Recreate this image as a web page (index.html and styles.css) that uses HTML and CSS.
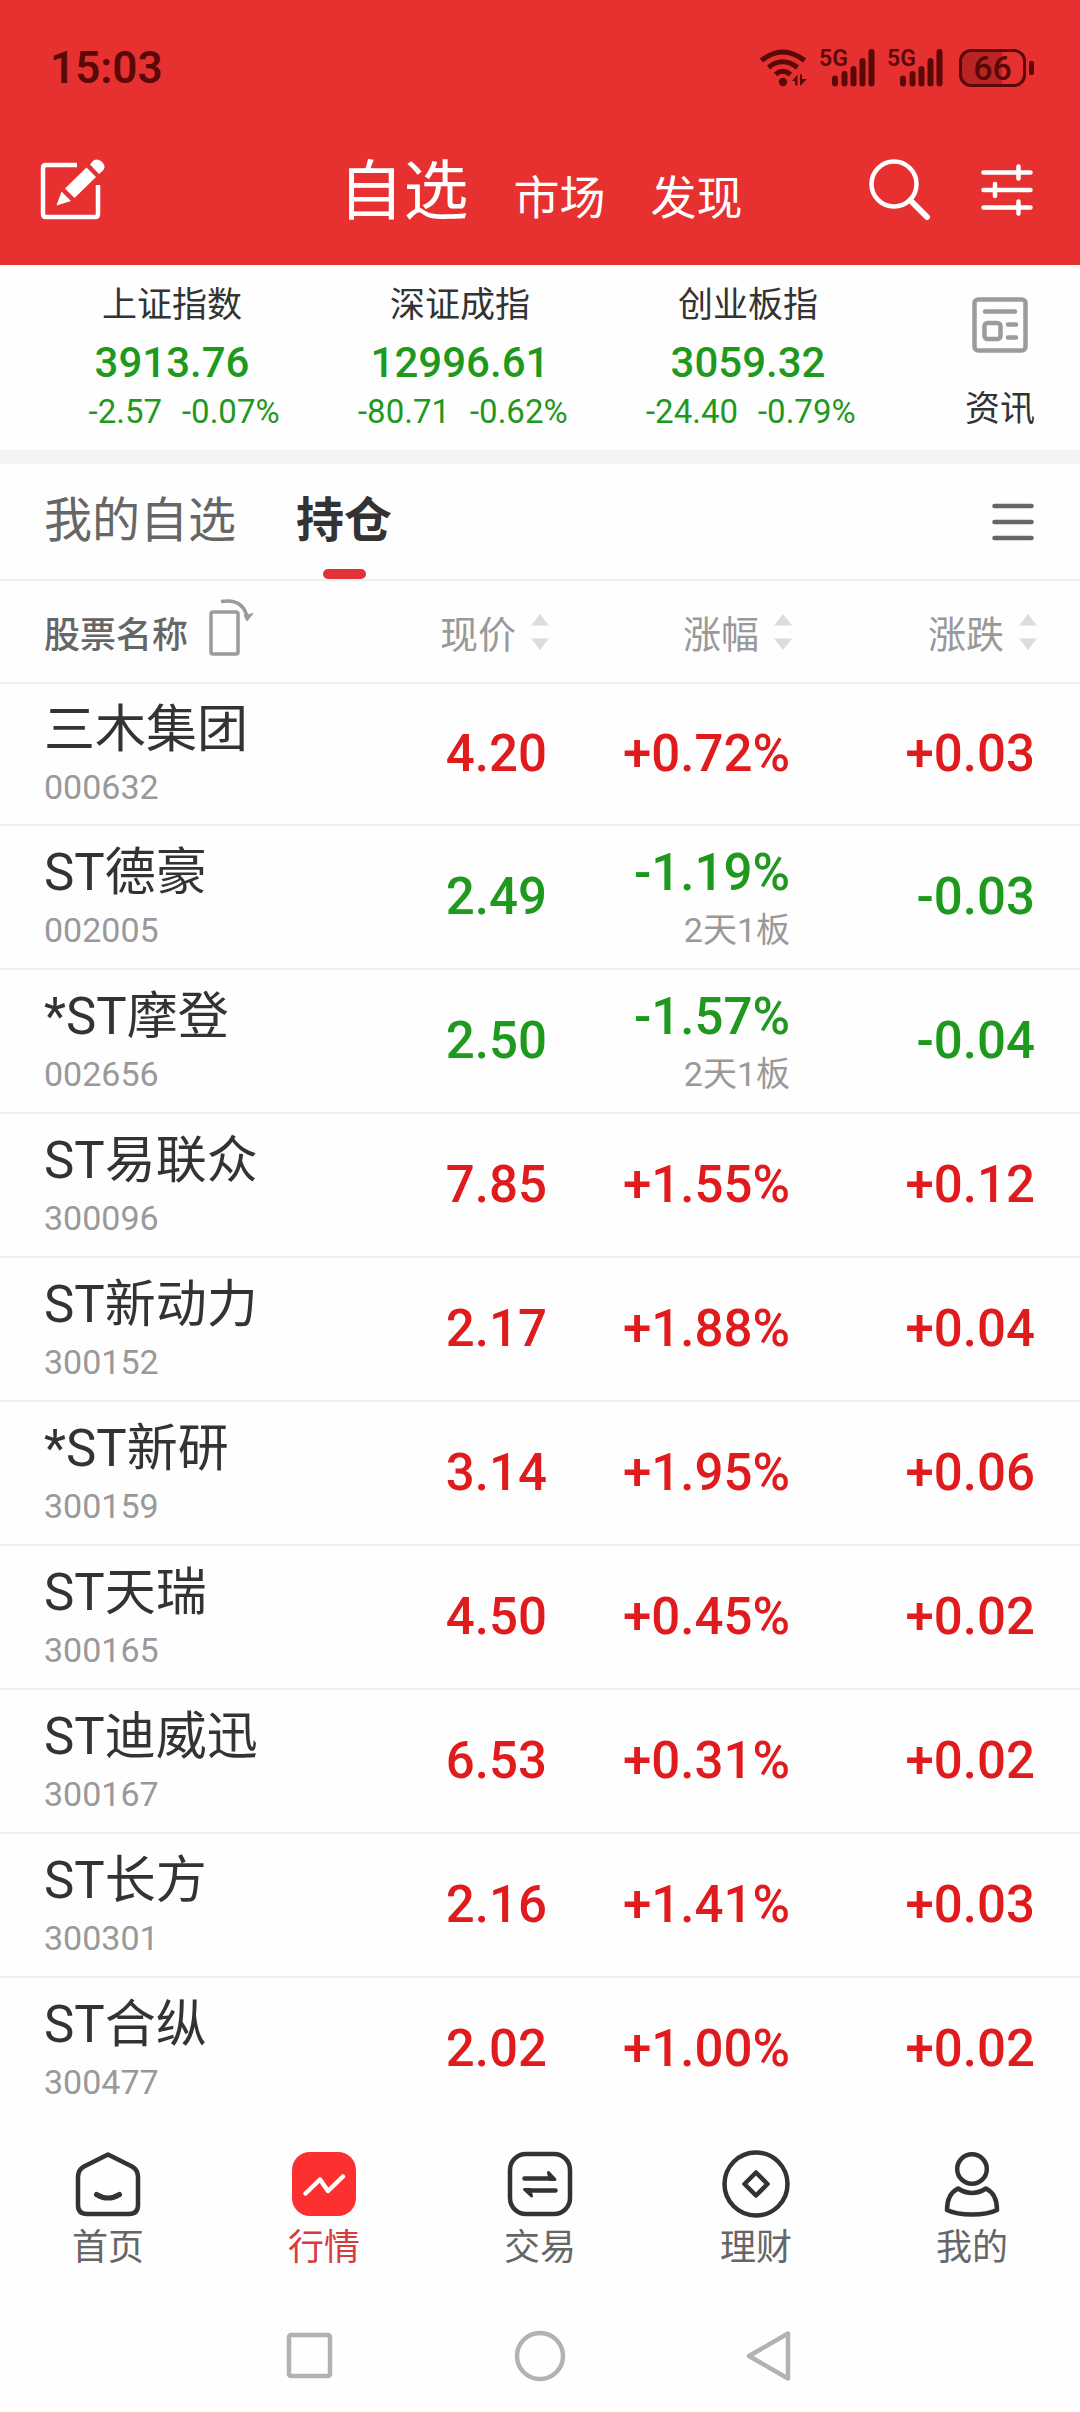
FILE: index.html
```html
<!DOCTYPE html>
<html lang="zh-CN">
<head>
<meta charset="utf-8">
<meta name="viewport" content="width=device-width, initial-scale=1">
<title>自选 - 持仓</title>
<link rel="stylesheet" href="styles.css">
</head>
<body>
<svg class="defs" aria-hidden="true">
  <symbol id="sort" viewBox="0 0 18 36"><path d="M9 0l9 11.500H0zM9 36l9-11.500H0z" fill="#dcdcdc"/></symbol>
  <symbol id="bars" viewBox="0 0 57 38">
    <path d="M16 29.500v5M25.500 25v9.500M34.500 20v14.500M43.500 12v22.500M52.500 3v31.500" fill="none" stroke="#5a0808" stroke-width="6" stroke-linecap="round"/>
  </symbol>
</svg>

<header class="top">
  <div class="status">
    <time class="clock">15:03</time>
    <div class="status-icons">
      <svg width="48" height="38" viewBox="0 0 48 38" aria-label="Wi-Fi">
        <g fill="none" stroke="#5a0808" stroke-width="5" stroke-linecap="butt">
          <path d="M1.500 11.500Q22.500-5.500 44.500 11.500"/><path d="M8.500 18.500Q22.500 7 37.500 18.500"/><path d="M15.500 25.500Q22.500 19 30.500 25.500"/>
        </g>
        <circle cx="23" cy="33" r="4.200" fill="#5a0808"/>
        <path d="M32 32l5.500-6.500v11h-2.500v-4.500zM40 25.500h2v4.500h5L40 37z" fill="#5a0808"/>
      </svg>
      <span class="signal"><span class="net">5G</span><svg width="57" height="38"><use href="#bars"/></svg></span>
      <span class="signal"><span class="net">5G</span><svg width="57" height="38"><use href="#bars"/></svg></span>
      <span class="battery"><span class="cell">66</span><span class="nub"></span></span>
    </div>
  </div>
  <div class="bar">
    <button class="icon-btn" aria-label="编辑">
      <svg width="66" height="64" viewBox="0 0 66 64">
        <path d="M37 7H6Q3 7 3 10V56Q3 59 6 59H55Q58 59 58 56V27" fill="none" stroke="#fff" stroke-width="4.500"/>
        <path d="M46.500 9.500L56 19 34.500 40 25 30.500zM21.500 33.500L31 43 16.500 47.500zM50 6.500Q55-1.500 61 3 67 8 63 12.500L59 16z" fill="#fff"/>
      </svg>
    </button>
    <nav class="main-tabs">
      <a class="current" href="#watch">自选</a>
      <a href="#market">市场</a>
      <a href="#discover">发现</a>
    </nav>
    <div class="tools">
      <button class="icon-btn" aria-label="搜索">
        <svg width="62" height="62" viewBox="0 0 62 62"><circle cx="25" cy="25" r="22.500" fill="none" stroke="#fff" stroke-width="4.500"/><path d="M41.500 41.500L58 58" stroke="#fff" stroke-width="6" stroke-linecap="round"/></svg>
      </button>
      <button class="icon-btn" aria-label="设置">
        <svg width="52" height="62" viewBox="0 0 52 62"><path d="M2.500 13.500h47M2.500 31h47M2.500 48.500h47M37.500 7.500v12M14 25v12M37.500 42.500v12" stroke="#fff" stroke-width="4.500" stroke-linecap="round"/></svg>
      </button>
    </div>
  </div>
</header>

<main>
  <section class="indices">
    <a class="index" href="#sh"><span class="index-name">上证指数</span><span class="index-value">3913.76</span><span class="index-change"><span>-2.57</span><span>-0.07%</span></span></a>
    <a class="index" href="#sz"><span class="index-name">深证成指</span><span class="index-value">12996.61</span><span class="index-change"><span>-80.71</span><span>-0.62%</span></span></a>
    <a class="index" href="#cy"><span class="index-name">创业板指</span><span class="index-value">3059.32</span><span class="index-change"><span>-24.40</span><span>-0.79%</span></span></a>
    <a class="news" href="#news">
      <svg width="56" height="56" viewBox="0 0 56 56" fill="none" stroke="#9b9b9b" stroke-width="4.500" stroke-linecap="round">
        <rect x="2.500" y="2.500" width="51" height="51" rx="3.500"/><path d="M13 14.500h30M36 27.500h8M36 40.500h8"/><rect x="12.500" y="26" width="16" height="16" rx="3"/>
      </svg>
      <span>资讯</span>
    </a>
  </section>

  <div class="list-tabs">
    <a href="#mine">我的自选</a>
    <a class="current" href="#holding">持仓</a>
    <button class="icon-btn menu" aria-label="菜单">
      <svg width="42" height="40" viewBox="0 0 42 40"><path d="M2.500 4h37M2.500 20h37M2.500 36h37" stroke="#666" stroke-width="4.500" stroke-linecap="round"/></svg>
    </button>
  </div>

  <table class="stocks">
    <colgroup><col><col class="col-price"><col class="col-rate"><col class="col-diff"></colgroup>
    <thead>
      <tr>
        <th scope="col"><div class="name-head">股票名称
          <svg width="48" height="68" viewBox="0 0 48 68" fill="none" stroke="#9b9b9b" stroke-width="3.500"><rect x="3" y="14" width="27" height="42" rx="2"/><path d="M13 3.500Q36 0 39.500 21" /><path d="M36 17l3 6 6-7.500-5.500 1.500z" fill="#9b9b9b" stroke-width="1"/></svg>
        </div></th>
        <th scope="col"><button class="sort">现价<svg width="18" height="36"><use href="#sort"/></svg></button></th>
        <th scope="col"><button class="sort">涨幅<svg width="18" height="36"><use href="#sort"/></svg></button></th>
        <th scope="col"><button class="sort">涨跌<svg width="18" height="36"><use href="#sort"/></svg></button></th>
      </tr>
    </thead>
    <tbody>
      <tr class="up"><td><div class="name">三木集团</div><div class="code">000632</div></td><td>4.20</td><td>+0.72%</td><td>+0.03</td></tr>
      <tr class="down"><td><div class="name">ST德豪</div><div class="code">002005</div></td><td>2.49</td><td><div class="rate">-1.19%</div><div class="streak">2天1板</div></td><td>-0.03</td></tr>
      <tr class="down"><td><div class="name">*ST摩登</div><div class="code">002656</div></td><td>2.50</td><td><div class="rate">-1.57%</div><div class="streak">2天1板</div></td><td>-0.04</td></tr>
      <tr class="up"><td><div class="name">ST易联众</div><div class="code">300096</div></td><td>7.85</td><td>+1.55%</td><td>+0.12</td></tr>
      <tr class="up"><td><div class="name">ST新动力</div><div class="code">300152</div></td><td>2.17</td><td>+1.88%</td><td>+0.04</td></tr>
      <tr class="up"><td><div class="name">*ST新研</div><div class="code">300159</div></td><td>3.14</td><td>+1.95%</td><td>+0.06</td></tr>
      <tr class="up"><td><div class="name">ST天瑞</div><div class="code">300165</div></td><td>4.50</td><td>+0.45%</td><td>+0.02</td></tr>
      <tr class="up"><td><div class="name">ST迪威迅</div><div class="code">300167</div></td><td>6.53</td><td>+0.31%</td><td>+0.02</td></tr>
      <tr class="up"><td><div class="name">ST长方</div><div class="code">300301</div></td><td>2.16</td><td>+1.41%</td><td>+0.03</td></tr>
      <tr class="up"><td><div class="name">ST合纵</div><div class="code">300477</div></td><td>2.02</td><td>+1.00%</td><td>+0.02</td></tr>
    </tbody>
  </table>
</main>

<nav class="app-nav">
  <a href="#home">
    <svg width="68" height="68" viewBox="0 0 68 68" fill="none" stroke="#333" stroke-width="4.500" stroke-linecap="round" stroke-linejoin="round"><path d="M34 4.500L58 16.500Q64 20 64 27V55Q64 64 55 64H13Q4 64 4 55V27Q4 20 10 16.500z"/><path d="M22.500 44.500Q34 51.500 45.500 44.500" stroke-width="5"/></svg>
    首页</a>
  <a class="current" href="#quotes">
    <svg width="68" height="68" viewBox="0 0 68 68"><rect x="2" y="2" width="64" height="64" rx="18" fill="#fc3031"/><path d="M15.500 43.500L30 29.500 38 41 53 26.500" fill="none" stroke="#fff" stroke-width="4.500" stroke-linecap="round" stroke-linejoin="round"/></svg>
    行情</a>
  <a href="#trade">
    <svg width="68" height="68" viewBox="0 0 68 68" fill="none" stroke="#333" stroke-width="4.500" stroke-linecap="round"><rect x="4" y="4" width="60" height="60" rx="16"/><path d="M18.500 28.500h28M21.500 40.500h28"/><path d="M42.500 22.500l6.500 7h-5zM25.500 46l-7-6.500h5z" fill="#333" stroke-width="3" stroke-linejoin="round"/></svg>
    交易</a>
  <a href="#wealth">
    <svg width="68" height="68" viewBox="0 0 68 68" fill="none" stroke="#333" stroke-width="4.500" stroke-linejoin="round"><circle cx="34" cy="34" r="31.500"/><path d="M34 22.500L45.500 34 34 45.500 22.500 34z"/></svg>
    理财</a>
  <a href="#me">
    <svg width="68" height="68" viewBox="0 0 68 68" fill="none" stroke="#333" stroke-width="4.500" stroke-linejoin="round"><circle cx="34" cy="19" r="14.800"/><path d="M20 38.500Q9 44 9 60Q18 64.500 34 64.500T59 60Q59 44 48 38.500Q34 47.500 20 38.500z"/></svg>
    我的</a>
</nav>

<nav class="system-nav">
  <button class="icon-btn" aria-label="最近任务"><svg width="54" height="54" viewBox="0 0 54 54" fill="none" stroke="#b2b2b2" stroke-width="4.500"><rect x="6" y="6" width="41" height="41" rx="2"/></svg></button>
  <button class="icon-btn" aria-label="主屏幕"><svg width="54" height="54" viewBox="0 0 54 54" fill="none" stroke="#b2b2b2" stroke-width="4.500"><circle cx="27" cy="27" r="23"/></svg></button>
  <button class="icon-btn" aria-label="返回"><svg width="54" height="54" viewBox="0 0 54 54" fill="none" stroke="#b2b2b2" stroke-width="4.500" stroke-linejoin="round"><path d="M6 27L45 4.500V49.500z"/></svg></button>
</nav>
</body>
</html>
```
FILE: styles.css
```css
* { box-sizing: border-box; }

body {
  margin: 0;
  background: #fefefe;
  color: #333;
  font-family: Roboto, "Noto Sans CJK SC", sans-serif;
}

a { color: inherit; text-decoration: none; }
svg { display: block; flex: none; }
.defs { position: absolute; width: 0; height: 0; }

.icon-btn, .sort {
  padding: 0;
  border: 0;
  background: none;
  color: inherit;
  font: inherit;
}

/* header */
.top { background: #e73131; color: #fff; }

.status {
  display: flex;
  justify-content: space-between;
  align-items: center;
  height: 136px;
  padding: 0 46px 0 50px;
  color: #5a0808;
}

.clock { font-size: 44px; font-weight: 600; }
.status-icons { display: flex; align-items: center; gap: 11px; }
.signal { position: relative; }

.net {
  position: absolute;
  top: 0;
  left: 0;
  font-size: 23px;
  font-weight: 600;
  line-height: 20px;
}

.battery { display: flex; align-items: center; gap: 3px; margin-left: 4px; }

.cell {
  width: 67px;
  height: 38px;
  border: 3px solid #5a0808;
  border-radius: 12px;
  background: linear-gradient(90deg, #b92424 66%, #e73131 66%);
  font-size: 34px;
  font-weight: 500;
  line-height: 33px;
  text-align: center;
}

.nub { width: 5px; height: 14px; border-radius: 2px; background: #5a0808; }

.bar {
  display: grid;
  grid-template-columns: 1fr auto 1fr;
  align-items: center;
  height: 129px;
  padding: 0 47px 22px 40px;
}

.main-tabs {
  display: flex;
  align-items: baseline;
  gap: 45px;
  padding: 10px 0 0 8px;
  font-size: 46px;
  line-height: 80px;
}

.main-tabs .current { font-size: 65px; }
.tools { display: flex; justify-content: flex-end; align-items: center; gap: 50px; }

/* market indices */
.indices {
  display: grid;
  grid-template-columns: repeat(3, minmax(0, 1fr)) 188px;
  padding: 15px 0 15px 28px;
  border-bottom: 14px solid #f4f4f4;
}

.index { display: flex; flex-direction: column; align-items: center; color: #1e991e; }
.index-name { color: #333; font-size: 35px; line-height: 52px; }
.index-value { font-size: 42px; font-weight: 500; line-height: 62px; }

.index-change {
  display: grid;
  grid-template-columns: 1fr 1fr;
  gap: 20px;
  align-self: stretch;
  font-size: 33px;
  line-height: 36px;
  padding-bottom: 4px;
}

.index-change span:first-child { text-align: right; }

.news {
  display: flex;
  flex-direction: column;
  align-items: center;
  gap: 32px;
  padding: 17px 0 0 28px;
  font-size: 35px;
  line-height: 50px;
}

/* list tabs */
.list-tabs {
  display: flex;
  gap: 60px;
  padding: 0 46px 0 44px;
  border-bottom: 2px solid #eee;
  color: #666;
  font-size: 48px;
  line-height: 96px;
}

.list-tabs a { padding-top: 9px; }
.list-tabs .current { color: #333; font-weight: 700; }

.list-tabs .current::after {
  content: "";
  display: block;
  width: 43px;
  height: 10px;
  margin: 0 auto;
  border-radius: 5px;
  background: #e13238;
}

.menu { margin-left: auto; }

/* holdings table */
.stocks {
  width: 100%;
  table-layout: fixed;
  border-collapse: separate;
  border-spacing: 0;
  font-size: 51px;
  font-weight: 500;
}

.col-price { width: 190px; }
.col-rate { width: 243px; }
.col-diff { width: 288px; }

.stocks th {
  height: 103px;
  padding: 0;
  border-bottom: 2px solid #f1f1f1;
  color: #999;
  font-size: 38px;
  font-weight: 400;
  text-align: right;
}

.stocks th:last-child { padding-right: 43px; }

.name-head {
  display: flex;
  align-items: center;
  gap: 20px;
  padding-left: 44px;
  color: #666;
  font-size: 36px;
  font-weight: 500;
}

.sort { display: inline-flex; align-items: center; gap: 15px; }

.stocks td {
  height: 144px;
  padding: 0 2px 0 0;
  border-bottom: 2px solid #f1f1f1;
  line-height: 72px;
  text-align: right;
}

.stocks tbody tr:first-child td { height: 142px; }
.stocks tbody tr:last-child td { border-bottom-color: transparent; }
.stocks td:first-child { padding-left: 44px; text-align: left; }
.stocks td:last-child { padding-right: 45px; }

.name, .rate { padding-top: 10px; }
.name { color: #333; font-weight: 400; }

.code, .streak {
  padding-bottom: 16px;
  color: #999;
  font-size: 34px;
  font-weight: 400;
  line-height: 42px;
}

.up { color: #df1b1d; }
.down { color: #1e991e; }

/* bottom navigation */
.app-nav {
  display: grid;
  grid-template-columns: repeat(5, 1fr);
  padding-top: 28px;
  color: #666;
  font-size: 36px;
  line-height: 48px;
}

.app-nav a { display: flex; flex-direction: column; align-items: center; gap: 6px; }
.app-nav .current { color: #d93a3c; }

.system-nav { display: flex; justify-content: center; gap: 176px; padding: 57px 0 30px; }
```
